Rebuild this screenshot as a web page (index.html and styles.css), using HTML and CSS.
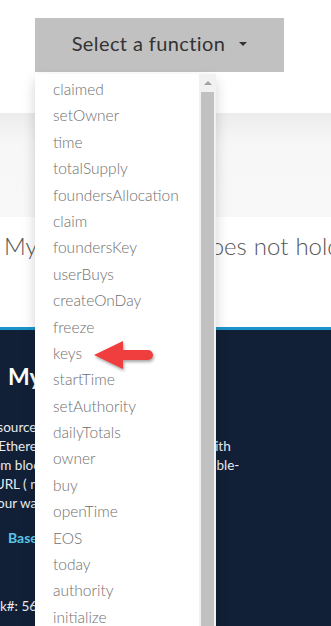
FILE: index.html
```html
<!DOCTYPE html>
<html>
<head>
<meta charset="utf-8">
<link rel="stylesheet" href="styles.css">
</head>
<body>
<div class="page">
  <div class="top">
    <button class="select-btn">Select a function <span class="caret"></span></button>
  </div>
  <div class="band"></div>
  <div class="notice">My wallet address does not hold any keys</div>
  <div class="dark">
    <h1 class="dark-title">My Contract</h1>
    <p class="intro">Open source tool to interact with<br>in the Ethereum blockchain, works nicely with<br>get from blockchain and generates a shareable-<br>as an URL ( no server needed )<br>with your wallet.</p>
    <p class="base">Base</p>
    <p class="block">Block#: 5612345</p>
  </div>

  <div class="dropdown">
    <ul class="fn-list">
      <li>claimed</li>
      <li>setOwner</li>
      <li>time</li>
      <li>totalSupply</li>
      <li>foundersAllocation</li>
      <li>claim</li>
      <li>foundersKey</li>
      <li>userBuys</li>
      <li>createOnDay</li>
      <li>freeze</li>
      <li>keys</li>
      <li>startTime</li>
      <li>setAuthority</li>
      <li>dailyTotals</li>
      <li>owner</li>
      <li>buy</li>
      <li>openTime</li>
      <li>EOS</li>
      <li>today</li>
      <li>authority</li>
      <li>initialize</li>
      <li>endTime</li>
    </ul>
    <div class="scrollbar">
      <div class="scroll-up"><span class="scroll-arrow"></span></div>
      <div class="scroll-thumb"></div>
    </div>
  </div>

  <svg class="arrow" width="70" height="40" viewBox="0 0 70 40">
    <path d="M4 18 L33 4 L33 13 L58 13 A5 5 0 0 1 58 23 L33 23 L33 32 Z" fill="#f03e3e"/>
  </svg>
</div>
</body>
</html>
```
FILE: styles.css
```css
html, body {
  margin: 0;
  padding: 0;
}
body {
  font-family: Lato, "Open Sans", "Liberation Sans", sans-serif;
  background: #fff;
  overflow: hidden;
}
.page {
  position: relative;
  width: 331px;
  height: 626px;
  overflow: hidden;
}
.top {
  height: 113px;
  padding: 18px 0 0 35px;
  box-sizing: border-box;
}
.select-btn {
  width: 249px;
  height: 54px;
  border: 0;
  background: #c1c1c1;
  color: #333;
  font-family: Lato, "Liberation Sans", sans-serif;
  font-size: 20px;
  font-weight: 400;
  letter-spacing: 0.4px;
  padding: 0 0 4px 0;
  display: flex;
  align-items: center;
  justify-content: center;
  gap: 14px;
}
.caret {
  display: inline-block;
  width: 0;
  height: 0;
  border-left: 4px solid transparent;
  border-right: 4px solid transparent;
  border-top: 4px solid #333;
  margin-top: 2px;
}
.band {
  height: 104px;
  background: linear-gradient(#ececec, #f7f7f7 30%, #f8f8f8);
}
.notice {
  height: 110px;
  box-sizing: border-box;
  padding: 14px 0 0 4px;
  font-size: 24px;
  font-weight: 300;
  color: #555;
  white-space: nowrap;
  word-spacing: 0.5px;
  line-height: 30px;
}
.dark {
  background: #122037;
  border-top: 3px solid #1b95c9;
  height: 300px;
  color: #e9ecef;
  padding: 32px 0 0 0;
  box-sizing: border-box;
}
.dark-title {
  margin: 0 0 0 8px;
  font-size: 23px;
  line-height: 28px;
  font-weight: 700;
  color: #fff;
  white-space: nowrap;
}
.intro {
  margin: 28px 0 0 -39px;
  font-size: 13.5px;
  line-height: 19px;
  white-space: nowrap;
}
.base {
  margin: 15px 0 0 8px;
  font-size: 14px;
  line-height: 19px;
  font-weight: 700;
  color: #5bc4e6;
}
.block {
  margin: 50px 0 0 -26px;
  font-size: 13.5px;
  line-height: 19px;
}
.dropdown {
  position: absolute;
  left: 35px;
  top: 74px;
  width: 181px;
  height: 600px;
  background: #fff;
  box-shadow: 0 6px 12px rgba(0, 0, 0, 0.18);
  overflow: hidden;
}
.fn-list {
  list-style: none;
  margin: 0;
  padding: 2px 0 0 18px;
  font-size: 15.5px;
  font-weight: 300;
  color: #6f6f6f;
}
.fn-list li {
  height: 26.4px;
  line-height: 26.4px;
  white-space: nowrap;
}
.scrollbar {
  position: absolute;
  top: 0;
  right: 0;
  width: 17px;
  height: 100%;
  background: #f1f1f1;
}
.scroll-up {
  height: 18px;
  display: flex;
  align-items: center;
  justify-content: center;
}
.scroll-arrow {
  width: 0;
  height: 0;
  border-left: 4px solid transparent;
  border-right: 4px solid transparent;
  border-bottom: 4px solid #a3a3a3;
}
.scroll-thumb {
  margin: 0 2px;
  height: 560px;
  background: #c1c1c1;
}
.arrow {
  position: absolute;
  left: 90px;
  top: 337px;
  filter: drop-shadow(1px 2px 1.5px rgba(0, 0, 0, 0.35));
}
```
